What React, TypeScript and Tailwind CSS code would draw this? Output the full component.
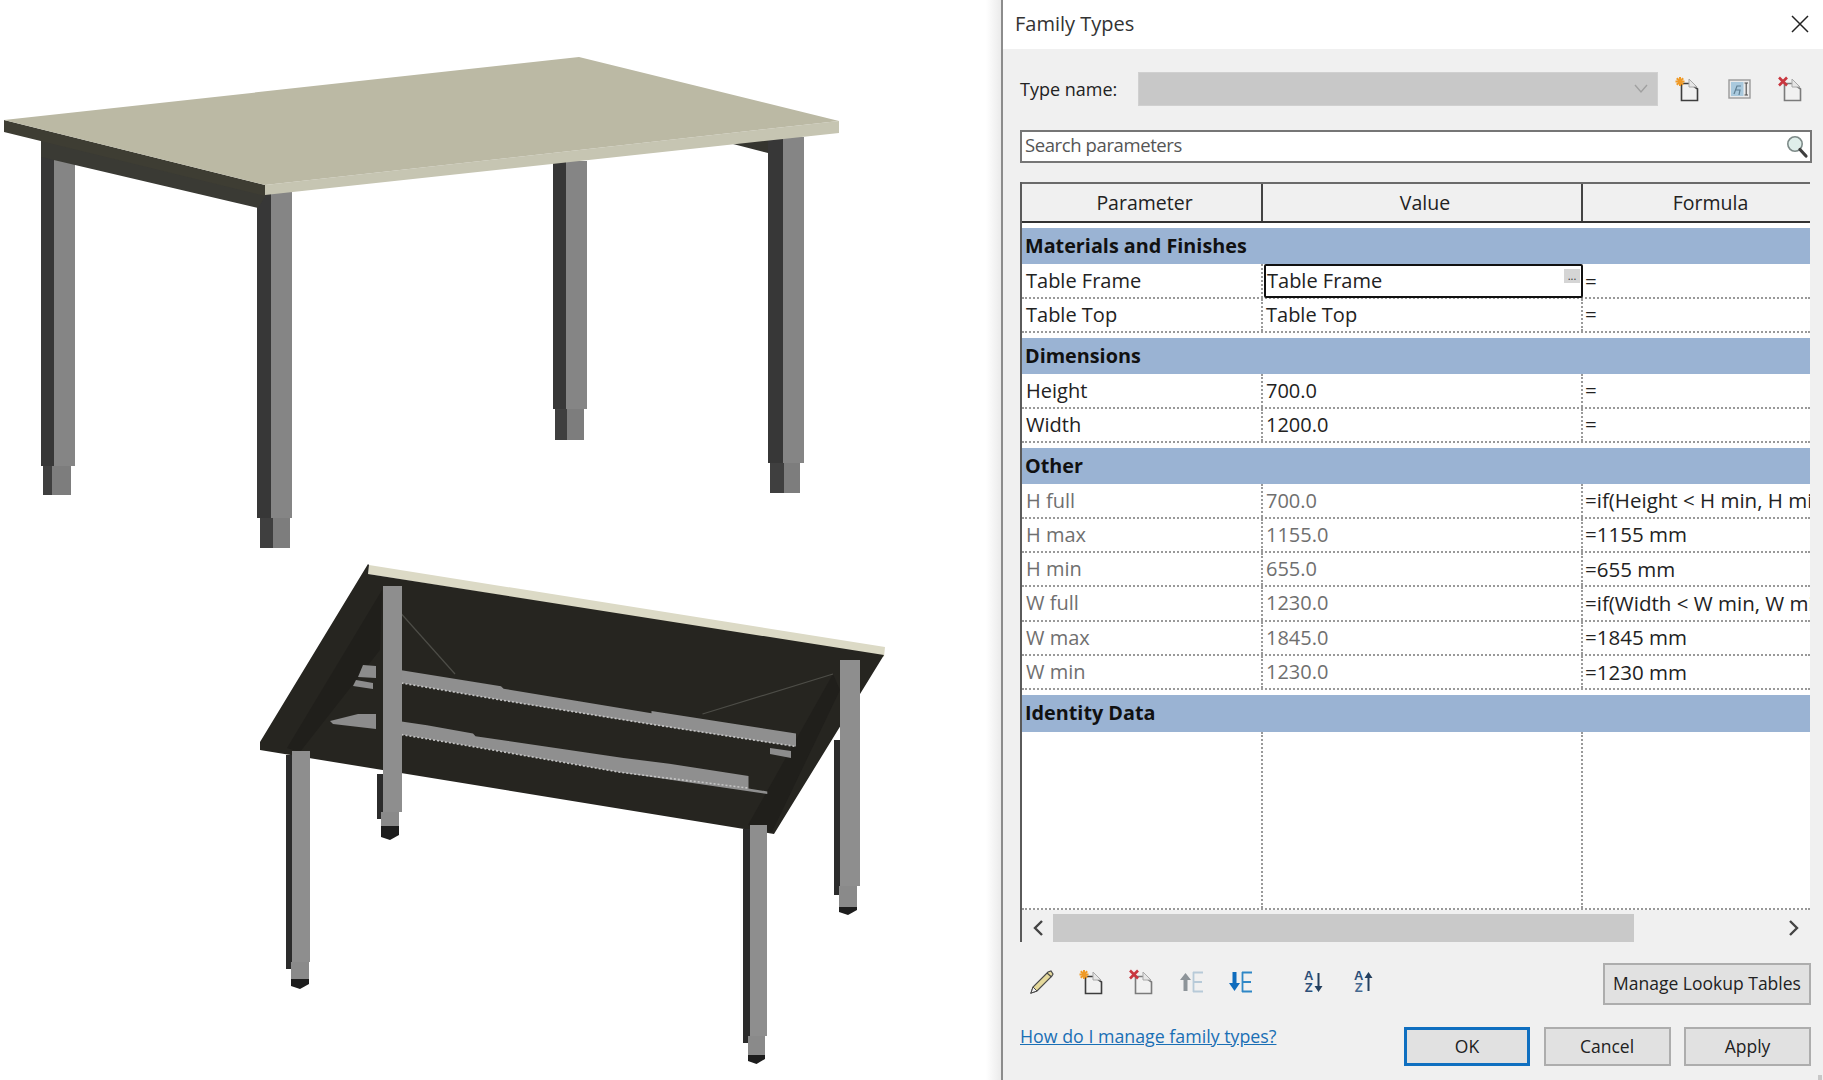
import React from "react";

function TablesDrawing() {
  const leg = (dx0: number, dx1: number, lx1: number, top: number, bot: number, fx0: number, fx1: number, fx2: number, fbot: number, key: string) => (
    <g key={key}>
      <rect x={dx0} y={top} width={dx1 - dx0} height={bot - top} fill="#373737" />
      <rect x={dx1} y={top} width={lx1 - dx1} height={bot - top} fill="#858585" />
      <rect x={fx0} y={bot} width={fx1 - fx0} height={fbot - bot} fill="#3f3f3f" />
      <rect x={fx1} y={bot} width={fx2 - fx1} height={fbot - bot} fill="#7d7d7d" />
    </g>
  );
  const leg2 = (sx0: number, sy0: number, sy1: number, lx0: number, lx1: number, top: number, bot: number, fx0: number, fx1: number, fbot: number, dbot: number, key: string) => (
    <g key={key}>
      <rect x={sx0} y={sy0} width={lx0 - sx0} height={sy1 - sy0} fill="#2b2b2b" />
      <rect x={lx0} y={top} width={lx1 - lx0} height={bot - top} fill="#8e8e8e" />
      <rect x={fx0} y={bot} width={fx1 - fx0} height={fbot - bot} fill="#8a8a8a" />
      <polygon points={`${fx0},${fbot} ${fx1},${fbot} ${fx1},${dbot - 5} ${(fx0 + fx1) / 2},${dbot} ${fx0},${dbot - 3}`} fill="#1d1d1d" />
    </g>
  );
  return (
    <svg width="986" height="1080" viewBox="0 0 986 1080" className="block">
      {/* upper table, seen from above */}
      {leg(41, 54, 75, 150, 466, 43, 52, 71, 495, "a")}
      {leg(257, 271, 292, 188, 518, 260, 273, 290, 548, "b")}
      {leg(553, 566, 587, 161, 409, 555, 567, 584, 440, "c")}
      {leg(768, 783, 804, 137, 463, 770, 784, 800, 493, "d")}
      <polygon points="41,135 265,190 265,197 258,208 41,157" fill="#3a3a34" />
      <polygon points="733,144 768,138 768,153" fill="#35352f" />
      <polygon points="4,120 265,185 265,196 4,132" fill="#3e3d33" />
      <polygon points="265,185 839,121 839,133 265,195" fill="#c6c5b2" />
      <polygon points="4,120 579,57 839,121 265,185" fill="#bbb9a4" />

      {/* lower table, seen from below */}
      <polygon points="369,565 885,647 884,657 368,574" fill="#dcdac6" />
      <polygon points="368,564 369,565 368,574 884,655 774,834 260,750 260,742" fill="#262520" />
      <polygon points="382,590 380,650 300,752 287,748" fill="#201f1b" />
      <polygon points="833,674 840,690 772,832 748,825" fill="#201f1b" />
      <line x1="401.5" y1="614" x2="455" y2="674" stroke="#4d4d47" strokeWidth="1.2" />
      <line x1="702.5" y1="714" x2="833" y2="674" stroke="#4d4d47" strokeWidth="1.2" />
      <polygon points="363,665 376,666 376,678 358,677" fill="#8c8c8c" />
      <polygon points="356,680 373,683 373,689 353,686" fill="#8c8c8c" />
      <polygon points="770,748 791,751 791,758 770,754" fill="#8c8c8c" />
      <polygon
        points="401.5,670.2 501,686.3 503.6,688.8 651.5,713.2 651.5,711.1 796,733.5 796,746.6 650,724.2 501,700.1 401.5,682.9"
        fill="#8f8f8f"
      />
      <polyline points="401.5,683 501,700 650,724 796,746.5" fill="none" stroke="#c4c4c4" strokeWidth="1.6" strokeDasharray="2 2" />
      <polygon points="330,721 358,714 376,714 376,729 333,724" fill="#8c8c8c" />
      <polygon
        points="401.5,721.5 427,725.3 473,733.5 475.5,736.3 623.5,758 669.4,763.8 748.5,775.9 748.5,788.6 767.3,791.4 767.3,794.1 621,772.4 473,746.6 401.5,734.6"
        fill="#8f8f8f"
      />
      <polyline points="401.5,734.6 473,746.6 621,772.4 748,788" fill="none" stroke="#c4c4c4" strokeWidth="1.6" strokeDasharray="2 2" />
      {leg2(377, 774, 819, 383, 402, 586, 812, 381, 399, 826, 840, "e")}
      {leg2(286, 755, 969, 292, 310, 751, 962, 291, 309, 979, 989, "f")}
      {leg2(834, 740, 895, 840, 860, 660, 886, 839, 857, 907, 915, "g")}
      {leg2(743, 829, 1043, 750, 767, 825, 1036, 748, 765, 1055, 1064, "h")}
    </svg>
  );
}

function NewPage({ mark }: { mark: "star" | "x" }) {
  return (
    <svg width="24" height="26" viewBox="0 0 24 26" className="shrink-0">
      <path
        d="M6.5 7.5 H15 L22.5 13 V24.5 H6.5 Z"
        fill="#f1f1f1"
        stroke={mark === "star" ? "#3d3d3d" : "#7b7b7b"}
        strokeWidth="1.6"
      />
      <path d="M14 3 L22 11 H14 Z" fill="#e6e6e6" stroke="#a8a8a8" strokeWidth="1" />
      {mark === "star" ? (
        <g stroke="#ef9a27" strokeWidth="2">
          <line x1="5" y1="1" x2="5" y2="10" />
          <line x1="0.5" y1="5.5" x2="9.5" y2="5.5" />
          <line x1="1.8" y1="2.3" x2="8.2" y2="8.7" />
          <line x1="8.2" y1="2.3" x2="1.8" y2="8.7" />
        </g>
      ) : (
        <g stroke="#c9373f" strokeWidth="2.6">
          <line x1="1" y1="1.5" x2="9" y2="9.5" />
          <line x1="9" y1="1.5" x2="1" y2="9.5" />
        </g>
      )}
    </svg>
  );
}

function RenameIcon() {
  return (
    <svg width="23" height="20" viewBox="0 0 23 20" className="shrink-0">
      <rect x="1" y="1" width="21" height="18" fill="#eaeaea" stroke="#9a9a9a" strokeWidth="1.4" />
      <rect x="3" y="3" width="12.5" height="14" fill="#a9c9dd" />
      <path d="M6 15 L9 7 H13 M8 11 H12 L11 16" fill="none" stroke="#5f7f93" strokeWidth="1.2" />
      <path d="M16.5 4 H20 M18.2 4 V16 M16.5 16 H20" fill="none" stroke="#4b4b4b" strokeWidth="1.1" />
    </svg>
  );
}

function Magnifier() {
  return (
    <svg width="24" height="26" viewBox="0 0 24 26" className="shrink-0">
      <circle cx="10" cy="10" r="7.2" fill="#dfeeea" stroke="#7d8a88" strokeWidth="1.6" />
      <line x1="15" y1="15.5" x2="21" y2="22" stroke="#3f3f3f" strokeWidth="3.2" strokeLinecap="round" />
    </svg>
  );
}

function Pencil() {
  return (
    <svg width="24" height="24" viewBox="0 0 24 24" className="shrink-0">
      <polygon points="1,23 3,17 18,2 21,1 23,4 22,6 7,21" fill="#e5d99c" stroke="#4a4a4a" strokeWidth="1.2" />
      <polygon points="1,23 3,17 7,21" fill="#f0f0f0" stroke="#4a4a4a" strokeWidth="1" />
      <line x1="17" y1="3" x2="21.5" y2="7" stroke="#4a4a4a" strokeWidth="1.2" />
    </svg>
  );
}

function MoveIcon({ dir }: { dir: "up" | "down" }) {
  const up = dir === "up";
  const arrow = up ? "#8d9499" : "#0f6cbd";
  const e = up ? "#b7cad8" : "#2f87c6";
  return (
    <svg width="26" height="24" viewBox="0 0 26 24" className="shrink-0">
      {up ? (
        <path d="M6.5 3 L12 10 H8.5 V21 H4.5 V10 H1 Z" fill={arrow} />
      ) : (
        <path d="M6.5 21 L12 13 H8.5 V2 H4.5 V13 H1 Z" fill={arrow} />
      )}
      <path d="M14 2.5 H24 M14.5 2 V22 M14 12 H23 M14 21.5 H24" fill="none" stroke={e} strokeWidth="1.8" />
    </svg>
  );
}

function SortIcon({ dir }: { dir: "down" | "up" }) {
  return (
    <div className="flex h-[26px] w-[22px] shrink-0 items-center gap-[1px]">
      <div className="flex flex-col items-center font-['Liberation_Sans',sans-serif] text-[13px] leading-[12px] font-bold text-[#2d4f78]">
        <span>A</span>
        <span className={dir === "up" ? "text-[#46688f]" : ""}>Z</span>
      </div>
      <svg width="9" height="22" viewBox="0 0 9 22" className="shrink-0">
        {dir === "down" ? (
          <path d="M4.5 21 L8.5 15 H5.5 V2 H3.5 V15 H0.5 Z" fill="#23405f" />
        ) : (
          <path d="M4.5 1 L8.5 7 H5.5 V20 H3.5 V7 H0.5 Z" fill="#23405f" />
        )}
      </svg>
    </div>
  );
}

function Group({ name }: { name: string }) {
  return (
    <div className="flex h-[41.4px] flex-col justify-end bg-white">
      <div className="flex h-[36.7px] items-center bg-[#9ab3d3] pl-[3px] text-[19.8px] font-bold text-[#111]">{name}</div>
    </div>
  );
}

function Row({ p, v, f, muted, active }: { p: string; v: string; f: string; muted?: boolean; active?: boolean }) {
  const tone = muted ? "text-[#6f6f6f]" : "text-[#222]";
  return (
    <div className="grid h-[34.3px] grid-cols-[241px_320px_227px] border-b-2 border-dotted border-[#999] bg-white text-[20px]">
      <div className={`flex items-center border-r-2 border-dotted border-[#999] pl-[4px] ${tone}`}>{p}</div>
      {active ? (
        <div className="relative z-10 ml-[1px] flex h-[34px] items-center rounded-[2px] border-2 border-[#111] pl-[1px] text-[#222]">
          {v}
          <div className="absolute top-[3px] right-[1px] flex h-[14px] w-[16px] items-center justify-center bg-[#d5d5d5] text-[11px] leading-[8px] text-[#333]">
            ...
          </div>
        </div>
      ) : (
        <div className={`flex items-center border-r-2 border-dotted border-[#999] pl-[3px] ${tone}`}>{v}</div>
      )}
      <div className="flex items-center overflow-hidden pl-[2px] text-[20.5px] whitespace-nowrap text-[#222]">{f}</div>
    </div>
  );
}

function Btn({ label, w, primary }: { label: string; w: string; primary?: boolean }) {
  return (
    <button
      className={`flex items-center justify-center bg-[#e1e1e1] text-[17.5px] text-[#222] ${w} ${
        primary ? "border-[3px] border-[#0f6fc0]" : "border-2 border-[#adadad]"
      }`}
    >
      {label}
    </button>
  );
}

export default function App() {
  return (
    <div className="relative flex h-[1080px] w-[1823px] overflow-hidden bg-white font-['Open_Sans',sans-serif]">
      <div className="w-[986px] shrink-0">
        <TablesDrawing />
      </div>
      <div className="w-[15px] shrink-0 bg-gradient-to-r from-white to-[#ebebeb]" />
      <div className="flex flex-1 flex-col border-l-2 border-[#8c8c8c] bg-[#f0f0f0]">
        <div className="flex h-[49px] items-center justify-between bg-white pr-[14px] pl-[12px]">
          <span className="mb-[2px] text-[20px] text-[#333]">Family Types</span>
          <svg width="18" height="18" viewBox="0 0 18 18" className="mb-[2px]">
            <path d="M1 1 L17 17 M17 1 L1 17" stroke="#222" strokeWidth="1.5" />
          </svg>
        </div>
        <div className="flex flex-1 flex-col pr-[11px] pl-[17px]">
          <div className="mt-[23px] flex h-[34px] items-center">
            <span className="mt-[1px] w-[118px] text-[18px] text-[#222]">Type name:</span>
            <div className="flex h-full w-[520px] items-center justify-end border border-[#d0d0d0] bg-[#c8c8c8] pr-[9px]">
              <svg width="14" height="10" viewBox="0 0 14 10">
                <path d="M1 1 L7 8 L13 1" fill="none" stroke="#a0a0a0" strokeWidth="1.4" />
              </svg>
            </div>
            <div className="ml-[17px] flex items-center">
              <NewPage mark="star" />
              <div className="ml-[29px]">
                <RenameIcon />
              </div>
              <div className="ml-[27px]">
                <NewPage mark="x" />
              </div>
            </div>
          </div>
          <div className="mt-[24px] flex h-[33px] items-center justify-between border-2 border-[#767676] bg-white pr-[1px] pl-[3px]">
            <span className="mb-[3px] text-[18.5px] tracking-[-0.4px] text-[#555]">Search parameters</span>
            <Magnifier />
          </div>
          <div className="mt-[19px] w-[790px] border-l-2 border-[#5a5a5a]">
            <div className="grid h-[41px] grid-cols-[241px_320px_227px] border-t-2 border-b-2 border-t-[#6a6a6a] border-b-[#333] text-[19.5px] text-[#222]">
              <div className="flex items-center justify-center border-r-2 border-[#444] pt-[1px] pl-[6px]">Parameter</div>
              <div className="flex items-center justify-center border-r-2 border-[#444] pt-[1px] pl-[6px]">Value</div>
              <div className="flex items-center justify-center pt-[1px] pl-[28px]">Formula</div>
            </div>
            <Group name="Materials and Finishes" />
            <Row p="Table Frame" v="Table Frame" f="=" active />
            <Row p="Table Top" v="Table Top" f="=" />
            <Group name="Dimensions" />
            <Row p="Height" v="700.0" f="=" />
            <Row p="Width" v="1200.0" f="=" />
            <Group name="Other" />
            <Row p="H full" v="700.0" f="=if(Height < H min, H min, if(Height > H max, H max, Height))" muted />
            <Row p="H max" v="1155.0" f="=1155 mm" muted />
            <Row p="H min" v="655.0" f="=655 mm" muted />
            <Row p="W full" v="1230.0" f="=if(Width < W min, W min, if(Width > W max, W max, Width))" muted />
            <Row p="W max" v="1845.0" f="=1845 mm" muted />
            <Row p="W min" v="1230.0" f="=1230 mm" muted />
            <Group name="Identity Data" />
            <div className="grid h-[178px] grid-cols-[241px_320px_227px] border-b-2 border-dotted border-[#999] bg-white">
              <div className="border-r-2 border-dotted border-[#999]" />
              <div className="border-r-2 border-dotted border-[#999]" />
              <div />
            </div>
            <div className="flex h-[32px] pt-[4px]">
              <div className="flex w-[31px] items-center justify-center">
                <svg width="12" height="18" viewBox="0 0 12 18">
                  <path d="M10 2 L3 9 L10 16" fill="none" stroke="#444" strokeWidth="2.4" />
                </svg>
              </div>
              <div className="w-[581px] bg-[#c9c9c9]" />
              <div className="flex flex-1 items-center justify-end pr-[10px]">
                <svg width="12" height="18" viewBox="0 0 12 18">
                  <path d="M2 2 L9 9 L2 16" fill="none" stroke="#444" strokeWidth="2.4" />
                </svg>
              </div>
            </div>
          </div>
          <div className="mt-[21px] flex h-[42px] items-center pl-[10px]">
            <div className="mb-[3px] flex items-center">
              <Pencil />
              <div className="ml-[25px]">
                <NewPage mark="star" />
              </div>
              <div className="ml-[26px]">
                <NewPage mark="x" />
              </div>
              <div className="ml-[26px]">
                <MoveIcon dir="up" />
              </div>
              <div className="ml-[23px]">
                <MoveIcon dir="down" />
              </div>
              <div className="ml-[50px]">
                <SortIcon dir="down" />
              </div>
              <div className="ml-[28px]">
                <SortIcon dir="up" />
              </div>
            </div>
            <div className="mr-[1px] ml-auto flex h-full">
              <Btn label="Manage Lookup Tables" w="w-[208px]" />
            </div>
          </div>
          <div className="mt-[22px] flex h-[39px]">
            <a className="mt-[-4px] text-[17.8px] text-[#1a6fb5] underline">How do I manage family types?</a>
            <div className="mr-[1px] ml-auto flex gap-[13.5px]">
              <Btn label="OK" w="w-[126px]" primary />
              <Btn label="Cancel" w="w-[127px]" />
              <Btn label="Apply" w="w-[127px]" />
            </div>
          </div>
        </div>
      </div>
      <div className="absolute right-[1px] bottom-0 h-[5px] w-[4px] bg-[#c8c8c8]" />
    </div>
  );
}
